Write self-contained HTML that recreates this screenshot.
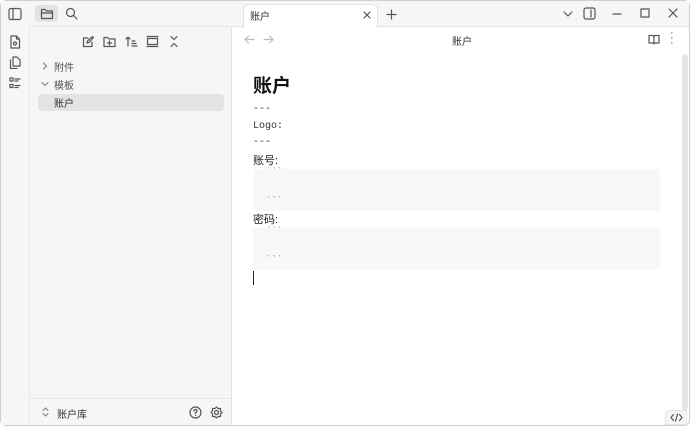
<!DOCTYPE html>
<html><head><meta charset="utf-8"><style>
*{margin:0;padding:0;box-sizing:border-box}
body{width:690px;height:426px;overflow:hidden;background:#fff;font-family:"Liberation Sans","Noto Sans CJK SC",sans-serif;position:relative;font-size:10px;color:#222}
.abs{position:absolute}
svg{position:absolute;fill:none;stroke:#555;stroke-width:1.2;stroke-linecap:round;stroke-linejoin:round}
.mono{font-family:"Liberation Mono","Noto Sans CJK SC",monospace}
</style></head><body>
<div class="abs" style="left:0;top:0;width:690px;height:426px;border:1px solid #d0d0d0;border-radius:6px"></div>
<div class="abs" style="left:1px;top:1px;width:231px;height:26px;background:#f6f6f6"></div>
<div class="abs" style="left:1px;top:27px;width:29px;height:398px;background:#f6f6f6;border-right:1px solid #e8e8e8"></div>
<div class="abs" style="left:30px;top:27px;width:202px;height:398px;background:#f6f6f6;border-right:1px solid #e2e2e2"></div>
<div class="abs" style="left:30px;top:26px;width:202px;height:1px;background:#e6e6e6"></div>
<div class="abs" style="left:232px;top:1px;width:457px;height:26px;background:#f6f6f6;border-bottom:1px solid #e3e3e3"></div>
<div class="abs" style="left:243px;top:4px;width:135px;height:24px;background:#fff;border:1px solid #e3e3e3;border-bottom:none;border-radius:6px 6px 0 0"></div>
<div class="abs" style="left:250px;top:8px;font-size:10px;color:#333">账户</div>
<svg style="left:363px;top:11px" width="8" height="8"><path d="M1 1L7 7M7 1L1 7"/></svg>
<svg style="left:386px;top:9px" width="11" height="11"><path d="M5.5 1V10M1 5.5H10"/></svg>
<svg style="left:563px;top:10px" width="10" height="8"><path d="M1 2L5 6L9 2"/></svg>
<svg style="left:583px;top:7px" width="14" height="13"><rect x="1" y="1" width="11" height="11" rx="2"/><path d="M8 3V10"/></svg>
<svg style="left:612px;top:10px" width="10" height="8"><path d="M1 4H9"/></svg>
<svg style="left:640px;top:8px" width="10" height="10"><rect x="1" y="1" width="8" height="8"/></svg>
<svg style="left:668px;top:8px" width="10" height="10"><path d="M1 1L9 9M9 1L1 9"/></svg>
<svg style="left:8px;top:7px" width="14" height="14"><rect x="1" y="1.5" width="12" height="11" rx="2"/><path d="M5 2V12"/></svg>
<div class="abs" style="left:35px;top:5px;width:23px;height:17px;background:#e3e3e3;border-radius:4px"></div>
<svg style="left:40px;top:7px" width="14" height="13"><path d="M1.5 2.5H5L6.5 4H12.5V11.5H1.5Z M1.5 6H12.5"/></svg>
<svg style="left:65px;top:7px" width="13" height="13"><circle cx="5.5" cy="5.5" r="4"/><path d="M8.5 8.5L12 12"/></svg>
<svg style="left:9px;top:35px" width="12" height="14"><path d="M2 1H7.5L10.5 4V13H2Z M7.5 1V4H10.5"/><circle cx="6" cy="8.5" r="1.5"/></svg>
<svg style="left:9px;top:56px" width="12" height="13"><path d="M4 1H8L11 4V10H4Z M1.5 4V12.5H8"/></svg>
<svg style="left:9px;top:77px" width="12" height="12"><rect x="1" y="1" width="3" height="3"/><rect x="1" y="7.5" width="3" height="3"/><path d="M6 2H11M6 4H9M6 8.5H11M6 10.5H9"/></svg>
<svg style="left:82px;top:35px" width="13" height="13"><path d="M10 7V11.5H1.5V3H6 M5 8L5.5 6L10.5 1.5L11.5 2.5L7 7.5Z"/></svg>
<svg style="left:103px;top:35px" width="13" height="13"><path d="M1 2.5H4.5L6 4H12V11.5H1Z M6.5 6V10M4.5 8H8.5"/></svg>
<svg style="left:125px;top:35px" width="13" height="13"><path d="M3 11V2M1 4L3 2L5 4M7 6H10M7 8.5H11M7 11H12"/></svg>
<svg style="left:146px;top:35px" width="13" height="13"><path d="M1 1.5H12M1 11.5H12"/><rect x="1.5" y="3.5" width="10" height="6"/></svg>
<svg style="left:168px;top:35px" width="12" height="13"><path d="M3 1.5L6 4.5L9 1.5M3 11.5L6 8.5L9 11.5"/></svg>
<svg style="left:42px;top:62px;stroke:#888" width="6" height="8"><path d="M1.5 1L4.5 4L1.5 7"/></svg>
<div class="abs" style="left:54px;top:59px;font-size:10px;color:#555">附件</div>
<svg style="left:41px;top:81px;stroke:#888" width="8" height="6"><path d="M1 1.5L4 4.5L7 1.5"/></svg>
<div class="abs" style="left:54px;top:77px;font-size:10px;color:#555">模板</div>
<div class="abs" style="left:38px;top:94px;width:186px;height:17px;background:#e3e3e3;border-radius:4px"></div>
<div class="abs" style="left:54px;top:95px;font-size:10px;color:#333">账户</div>
<div class="abs" style="left:30px;top:398px;width:202px;height:1px;background:#e6e6e6"></div>
<svg style="left:42px;top:407px;stroke:#888" width="7" height="10"><path d="M1 3.5L3.5 1L6 3.5M1 6.5L3.5 9L6 6.5"/></svg>
<div class="abs" style="left:57px;top:406px;font-size:10px;color:#333">账户库</div>
<svg style="left:189px;top:406px" width="13" height="13"><circle cx="6.5" cy="6.5" r="5.5"/><path d="M5 5Q5 3.5 6.5 3.5Q8 3.5 8 5Q8 6 6.5 6.7V7.5M6.5 9.5V9.6"/></svg>
<svg style="left:210px;top:406px" width="13" height="13"><circle cx="6.5" cy="6.5" r="2"/><path d="M6.5 1L8 2.5L10.5 2.5L10.5 5L12 6.5L10.5 8L10.5 10.5L8 10.5L6.5 12L5 10.5L2.5 10.5L2.5 8L1 6.5L2.5 5L2.5 2.5L5 2.5Z"/></svg>
<svg style="left:244px;top:35px;stroke:#bbb" width="11" height="9"><path d="M10 4.5H1M4.5 1L1 4.5L4.5 8"/></svg>
<svg style="left:263px;top:35px;stroke:#bbb" width="11" height="9"><path d="M1 4.5H10M6.5 1L10 4.5L6.5 8"/></svg>
<div class="abs" style="left:452px;top:33px;font-size:10px;color:#333">账户</div>
<svg style="left:648px;top:34px" width="12" height="11"><path d="M6 2.5V10M1 1.5H4.5Q6 1.5 6 3Q6 1.5 7.5 1.5H11V9H7.5Q6 9 6 10Q6 9 4.5 9H1Z"/></svg>
<div class="abs" style="left:670px;top:31px;font-size:11px;color:#555;line-height:5px">·<br>·<br>·</div>
<div class="abs" style="left:682px;top:54px;width:6px;height:356px;background:#e6e6e6;border-radius:3px"></div>
<div class="abs" style="left:253px;top:71px;font-size:19px;font-weight:bold;color:#111">账户</div>
<div class="abs mono" style="left:253px;top:104px;font-size:10px;color:#333">---</div>
<div class="abs mono" style="left:253px;top:121px;font-size:10px;color:#333">Logo:</div>
<div class="abs mono" style="left:253px;top:137px;font-size:10px;color:#333">---</div>
<div class="abs" style="left:253px;top:152px;font-size:11px;color:#222">账号:</div>
<div class="abs" style="left:253px;top:169px;width:407px;height:42px;background:#f8f8f8;border-radius:3px"></div>
<div class="abs mono" style="left:266px;top:167px;font-size:9px;color:#777">&#96;&#96;&#96;</div>
<div class="abs mono" style="left:266px;top:196px;font-size:9px;color:#777">&#96;&#96;&#96;</div>
<div class="abs" style="left:253px;top:211px;font-size:11px;color:#222">密码:</div>
<div class="abs" style="left:253px;top:228px;width:407px;height:42px;background:#f8f8f8;border-radius:3px"></div>
<div class="abs mono" style="left:266px;top:226px;font-size:9px;color:#777">&#96;&#96;&#96;</div>
<div class="abs mono" style="left:266px;top:255px;font-size:9px;color:#777">&#96;&#96;&#96;</div>
<div class="abs" style="left:253px;top:271px;width:1px;height:14px;background:#222"></div>
<div class="abs" style="left:665px;top:410px;width:22px;height:15px;background:#f6f6f6;border:1px solid #e3e3e3;border-radius:4px 0 0 0"></div>
<svg style="left:670px;top:413px" width="13" height="9"><path d="M3.5 1.5L1 4.5L3.5 7.5M9.5 1.5L12 4.5L9.5 7.5M7.5 1L5.5 8"/></svg>
</body></html>
